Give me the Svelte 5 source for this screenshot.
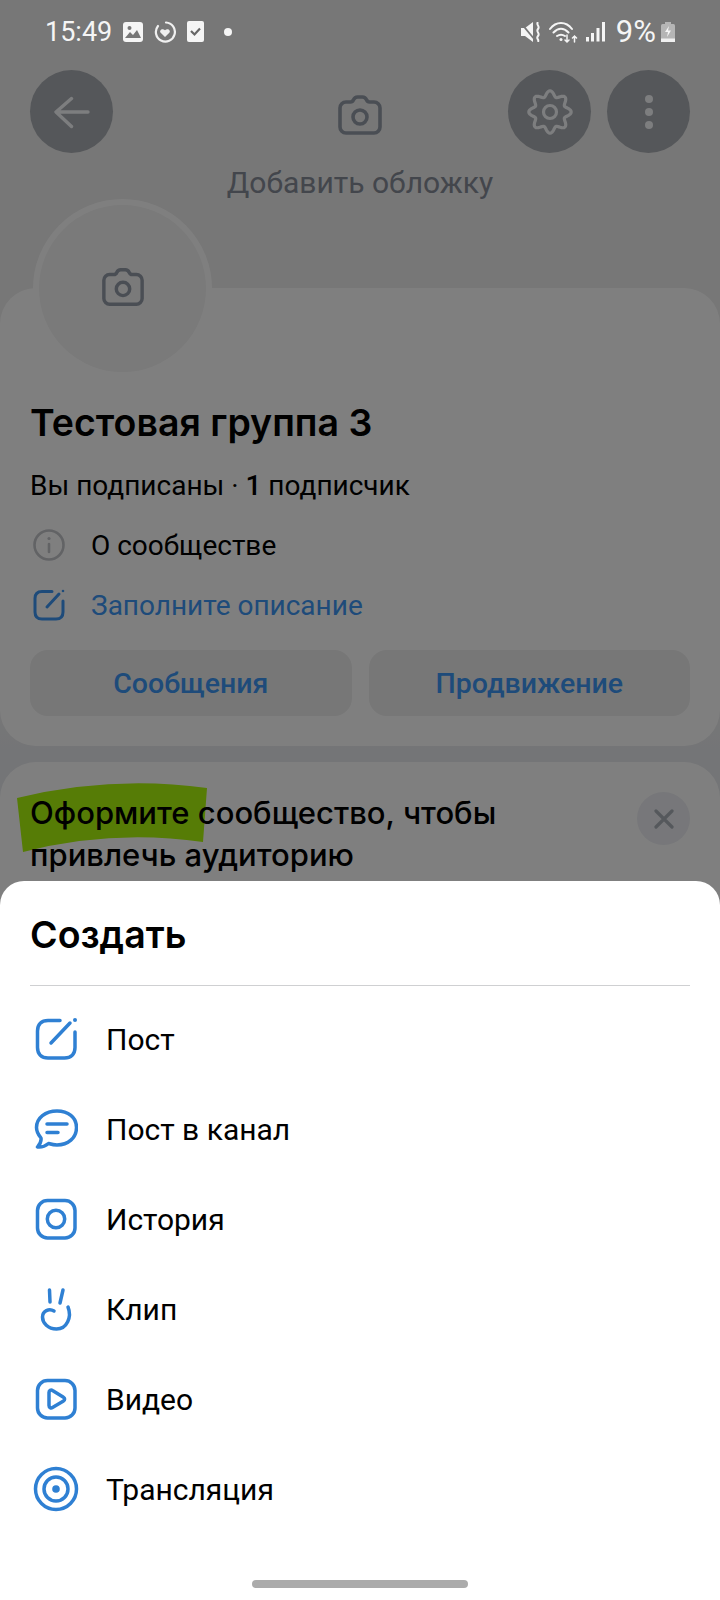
<script>
  const items = [
    { label: 'Пост', icon: 'post' },
    { label: 'Пост в канал', icon: 'channel' },
    { label: 'История', icon: 'story' },
    { label: 'Клип', icon: 'clip' },
    { label: 'Видео', icon: 'video' },
    { label: 'Трансляция', icon: 'live' }
  ];

  // eight soft lobes, first one pointing up
  const gearPoints = Array.from({ length: 128 }, (_, i) => {
    const a = (i / 128) * Math.PI * 2;
    const r = 18.4 + 2.8 * Math.cos(8 * a);
    return `${(23 + r * Math.sin(a)).toFixed(2)},${(23 - r * Math.cos(a)).toFixed(2)}`;
  }).join(' ');
</script>

{#snippet camera(size)}
  <svg width={size} height={size} viewBox="0 0 46 46" fill="none" stroke="currentColor" stroke-width="3.600" stroke-linejoin="round">
    <path d="M9 10h4.500c1.500 0 2.400-.8 3-2.200C17.300 6 18.500 5 20.500 5h5c2 0 3.200 1 4 2.800.6 1.400 1.500 2.200 3 2.200H37c3.300 0 6 2.700 6 6v19c0 3.300-2.700 6-6 6H9c-3.300 0-6-2.700-6-6V16c0-3.300 2.700-6 6-6z"/>
    <circle cx="23" cy="25" r="7"/>
  </svg>
{/snippet}

<div class="screen">
  <div class="page">
    <div class="cover">
      <div class="topbar">
        <button class="round">
          <svg width="36" height="36" viewBox="0 0 36 36" fill="none" stroke="#fafcff" stroke-width="3.400" stroke-linecap="round" stroke-linejoin="round"><path d="M34 18H3M17.500 4.500L2 18l15.500 14.500"/></svg>
        </button>
        <div class="spacer"></div>
        <button class="round">
          <svg width="46" height="46" viewBox="0 0 46 46" fill="none" stroke="#fafcff" stroke-width="3.200" stroke-linejoin="round">
            <polygon points={gearPoints}/>
            <circle cx="23" cy="23" r="6.500"/>
          </svg>
        </button>
        <button class="round">
          <svg width="10" height="36" viewBox="0 0 10 36" fill="#fafcff"><circle cx="5" cy="5" r="4"/><circle cx="5" cy="18" r="4"/><circle cx="5" cy="31" r="4"/></svg>
        </button>
      </div>
      <div class="add-cover">
        <span class="cover-cam">{@render camera(46)}</span>
        <span class="cover-text">Добавить обложку</span>
      </div>
    </div>

    <section class="card info">
      <div class="avatar"><span class="avatar-cam">{@render camera(44)}</span></div>
      <h1>Тестовая группа 3</h1>
      <p class="subs">Вы подписаны · <b>1</b> подписчик</p>
      <div class="line">
        <svg width="32" height="32" viewBox="0 0 32 32" fill="none" stroke="#c4c6cb" stroke-width="2.600"><circle cx="16" cy="16" r="14.500"/><path d="M16 15v8" stroke-linecap="round"/><circle cx="16" cy="9.500" r="1.600" fill="#c4c6cb" stroke="none"/></svg>
        <span>О сообществе</span>
      </div>
      <div class="line accent">
        <svg width="32" height="32" viewBox="0 0 32 32" fill="none" stroke="currentColor" stroke-width="3" stroke-linecap="round"><path d="M19 2.500H9C4.500 2.500 2 5 2 9.500v13.500c0 4.500 2.500 7 7 7h14c4.500 0 7-2.500 7-7V12"/><path d="M14 18L26 5"/><circle cx="30" cy="2" r="1.300" fill="currentColor" stroke="none"/></svg>
        <span>Заполните описание</span>
      </div>
      <div class="actions">
        <button>Сообщения</button>
        <button>Продвижение</button>
      </div>
    </section>

    <section class="card promo">
      <svg class="marker" width="190" height="72" viewBox="0 0 190 72"><path d="M0 15Q95-8 190 5l-4 54Q95 46 6 69z" fill="#acf80c"/></svg>
      <p>Оформите сообщество, чтобы<br>привлечь аудиторию</p>
      <span class="close">
        <svg width="20" height="20" viewBox="0 0 20 20" stroke="#aab0b8" stroke-width="3.200" stroke-linecap="round"><path d="M2 2l16 16M18 2L2 18"/></svg>
      </span>
    </section>
  </div>

  <div class="scrim"></div>

  <div class="status">
    <div class="status-left">
      <span class="clock">15:49</span>
      <svg width="20" height="20" viewBox="0 0 20 20"><rect width="20" height="20" rx="3" fill="#f5f5f5"/><path d="M2 16l5-6 3 3 4-5 4 8z" fill="#777"/><circle cx="6.500" cy="6" r="2" fill="#777"/></svg>
      <svg width="22" height="22" viewBox="0 0 22 22" fill="none"><path d="M12 1.500a9.500 9.500 0 1 1-8 3.500" stroke="#f0f0f0" stroke-width="2.200" stroke-linecap="round"/><path d="M11 16l-4.300-4.300c-2-2.300 1.700-5 4.300-2.500 2.600-2.500 6.300.2 4.300 2.500z" fill="#f0f0f0"/></svg>
      <svg width="17" height="21" viewBox="0 0 17 21"><rect width="17" height="21" rx="2" fill="#f5f5f5"/><path d="M4 10l3.500 3.500L13 7.500" fill="none" stroke="#666" stroke-width="2.200"/></svg>
      <span class="dot"></span>
    </div>
    <div class="status-right">
      <svg width="20" height="20" viewBox="0 0 20 20" fill="#f5f5f5"><path d="M0 6h4l8-6v20l-8-6H0z"/><path d="M0 1l14 17" stroke="#777" stroke-width="1.800"/><path d="M17 0c-2.500 3 2.500 4 0 7s2.500 4 0 7 1.500 3 0 6" fill="none" stroke="#f5f5f5" stroke-width="2"/></svg>
      <svg width="29" height="22" viewBox="0 0 29 22" fill="none" stroke="#f5f5f5" stroke-width="2" stroke-linecap="round"><path d="M1 8c6-8 16-8 22 0M4.500 11.500c5-5 10-5 15 0M8 15c3-2 5-2 8 0"/><circle cx="12" cy="18.500" r="1.500" fill="#f5f5f5" stroke="none"/><path d="M18 14v7M16 19l2 2 2-2M25.500 21v-6M23.500 17l2-2 2 2" stroke-width="1.500"/></svg>
      <svg width="19" height="20" viewBox="0 0 19 20" fill="#f5f5f5"><rect x="0" y="15" width="3" height="4.500"/><rect x="5" y="11" width="3" height="8.500"/><rect x="10.500" y="6" width="3" height="13.500"/><rect x="16" y="0" width="3" height="19.500"/></svg>
      <span class="pct">9%</span>
      <svg class="battery" width="14" height="20" viewBox="0 0 14 20"><rect x="4" width="6" height="2" fill="#b5b5b5"/><rect y="2" width="14" height="18" rx="1.500" fill="#b5b5b5"/><rect y="16.500" width="14" height="3.500" fill="#f0f0f0"/><path d="M8 4L4 10h3l-1 5 4-6.500H7z" fill="#f5f5f5"/></svg>
    </div>
  </div>

  <div class="sheet">
    <h2>Создать</h2>
    <ul>
      {#each items as item}
        <li>
          <span class="ico">
            {#if item.icon === 'post'}
              <svg width="44" height="44" viewBox="0 0 44 44" fill="none" stroke="#2f80d3" stroke-width="3.500" stroke-linecap="round"><path d="M26 3.500H14C7.500 3.500 3.500 7.500 3.500 14v16.500C3.500 37 7.500 41 14 41h16.500C37 41 41 37 41 30.500V15"/><path d="M17 26L36 6"/><circle cx="41" cy="3" r="2" fill="#2f80d3" stroke="none"/></svg>
            {:else if item.icon === 'channel'}
              <svg width="44" height="44" viewBox="0 0 44 44" fill="none" stroke="#2f80d3" stroke-width="3.500" stroke-linecap="round" stroke-linejoin="round"><path d="M23 4C11.500 4 2.500 11 2.500 20.500c0 4.500 2 7.500 4.500 10.500.5 3-1 6-3.500 9 4 .5 8-1 11-3.500 2.500.7 5.500 1.500 8.500 1.500 11 0 19.500-7 19.500-17.500S34 4 23 4z"/><path d="M13 17h20M13 25.500h11"/></svg>
            {:else if item.icon === 'story'}
              <svg width="44" height="44" viewBox="0 0 44 44" fill="none" stroke="#2f80d3" stroke-width="3.500"><rect x="3.500" y="3.500" width="37.500" height="37.500" rx="10"/><circle cx="22" cy="22" r="8.700"/></svg>
            {:else if item.icon === 'clip'}
              <svg width="44" height="44" viewBox="0 0 44 44" fill="none" stroke="#2f80d3" stroke-width="3.500" stroke-linecap="round"><path d="M15.500 3l.5 12M29 3l-3 13"/><path d="M34 20C38 30 33 42 22.500 42 14 42 8.500 36 8.500 30 8.500 24 15 21 20 24"/></svg>
            {:else if item.icon === 'video'}
              <svg width="44" height="44" viewBox="0 0 44 44" fill="none" stroke="#2f80d3" stroke-width="3.500" stroke-linejoin="round"><rect x="3.500" y="3.500" width="37.500" height="37.500" rx="10"/><path d="M15 15.500v13c0 2 2 3 3.500 2l11-6.500c1.500-.8 1.500-3 0-3.800l-11-6.700c-1.500-1-3.500 0-3.500 2z"/></svg>
            {:else}
              <svg width="46" height="46" viewBox="0 0 46 46" fill="none" stroke="#2f80d3" stroke-width="3.500"><circle cx="23" cy="23" r="20.500"/><circle cx="23" cy="23" r="12"/><circle cx="23" cy="23" r="3.800" fill="#2f80d3" stroke="none"/></svg>
            {/if}
          </span>
          <span>{item.label}</span>
        </li>
      {/each}
    </ul>
    <div class="home"></div>
  </div>
</div>

<style>
  :global(body) {
    margin: 0;
  }

  .screen {
    position: relative;
    width: 720px;
    height: 1600px;
    overflow: hidden;
    font-family: Roboto, "Liberation Sans", sans-serif;
    color: #000;
  }

  .page {
    height: 100%;
    background: linear-gradient(#eeeeee 0, #eeeeee 700px, #e8eaee 760px);
  }

  .scrim {
    position: absolute;
    inset: 0;
    background: rgba(0, 0, 0, 0.5);
    pointer-events: none;
  }

  .cover {
    height: 288px;
    padding-top: 70px;
    box-sizing: border-box;
  }

  .topbar {
    display: flex;
    gap: 16px;
    padding: 0 30px;
  }

  .spacer {
    flex: 1;
  }

  .round {
    width: 83px;
    height: 83px;
    border: 0;
    padding: 0;
    border-radius: 50%;
    background: #aaaeb4;
    display: flex;
    align-items: center;
    justify-content: center;
  }

  .add-cover {
    margin-top: -61px;
    display: flex;
    flex-direction: column;
    align-items: center;
    gap: 27px;
  }

  .cover-cam {
    height: 46px;
    color: #949ca9;
  }

  .cover-text {
    font-size: 30px;
    line-height: 36px;
    color: #868c98;
  }

  .card {
    background: #fff;
    border-radius: 36px;
    position: relative;
  }

  .info {
    height: 458px;
    padding: 0 30px;
    box-sizing: border-box;
  }

  .avatar {
    position: absolute;
    left: 33px;
    top: -89px;
    width: 167px;
    height: 167px;
    border: 6px solid #fff;
    border-radius: 50%;
    background: #f4f4f4;
    display: flex;
    align-items: center;
    justify-content: center;
    color: #949ca9;
  }

  .avatar-cam {
    height: 44px;
    margin-top: -4px;
  }

  h1 {
    margin: 0;
    padding-top: 113px;
    font-family: Inter, Roboto, sans-serif;
    font-size: 37.500px;
    line-height: 44px;
    font-weight: 600;
  }

  .subs {
    margin: 23px 0 0;
    font-size: 28px;
    line-height: 36px;
  }

  .subs b {
    font-weight: 500;
  }

  .line {
    display: flex;
    align-items: center;
    gap: 26px;
    height: 60px;
    padding-left: 3px;
    font-size: 28px;
  }

  .subs + .line {
    margin-top: 11px;
  }

  .accent {
    color: #3c96f5;
  }

  .actions {
    display: flex;
    gap: 17px;
    margin-top: 15px;
  }

  .actions button {
    flex: 1;
    height: 66px;
    border: 0;
    border-radius: 18px;
    background: #eeeeee;
    color: #3c96f5;
    font: 500 28.500px Roboto, sans-serif;
  }

  .promo {
    margin-top: 16px;
    height: 200px;
    padding: 30px 30px 0;
    box-sizing: border-box;
    display: flex;
    justify-content: space-between;
    align-items: flex-start;
  }

  .promo p {
    position: relative;
    margin: 0;
    font-family: Inter, Roboto, sans-serif;
    font-size: 31px;
    font-weight: 500;
    line-height: 42px;
  }

  .marker {
    position: absolute;
    left: 17px;
    top: 21px;
  }

  .close {
    width: 53px;
    height: 53px;
    border-radius: 50%;
    background: #eeeff4;
    display: flex;
    align-items: center;
    justify-content: center;
    position: relative;
  }

  .status {
    position: absolute;
    inset: 0 0 auto;
    height: 60px;
    padding: 3px 45px 0;
    display: flex;
    justify-content: space-between;
    align-items: center;
    color: #f5f5f5;
    font-size: 27px;
    box-sizing: border-box;
  }

  .status-left {
    display: flex;
    align-items: center;
    gap: 11px;
  }

  .status-right {
    display: flex;
    align-items: center;
    gap: 8px;
  }

  .dot {
    width: 8px;
    height: 8px;
    margin-left: 9px;
    border-radius: 50%;
    background: #f5f5f5;
  }

  .pct {
    margin-left: 3px;
    font-size: 31px;
  }

  .battery {
    margin-left: -3px;
  }

  .sheet {
    position: absolute;
    inset: 881px 0 0;
    background: #fff;
    border-radius: 24px 24px 0 0;
    padding: 0 30px;
  }

  h2 {
    margin: 0;
    height: 105px;
    line-height: 108px;
    font-family: Inter, Roboto, sans-serif;
    font-size: 37.500px;
    font-weight: 600;
    border-bottom: 1.500px solid #cfd0d2;
    box-sizing: border-box;
  }

  ul {
    list-style: none;
    margin: 8px 0 0;
    padding: 0;
  }

  li {
    display: flex;
    align-items: center;
    height: 90px;
    font-size: 30px;
    gap: 24px;
  }

  .ico {
    width: 52px;
    display: flex;
    justify-content: center;
  }

  .home {
    position: absolute;
    left: 252px;
    bottom: 12px;
    width: 216px;
    height: 8px;
    border-radius: 4px;
    background: #ababab;
  }
</style>
